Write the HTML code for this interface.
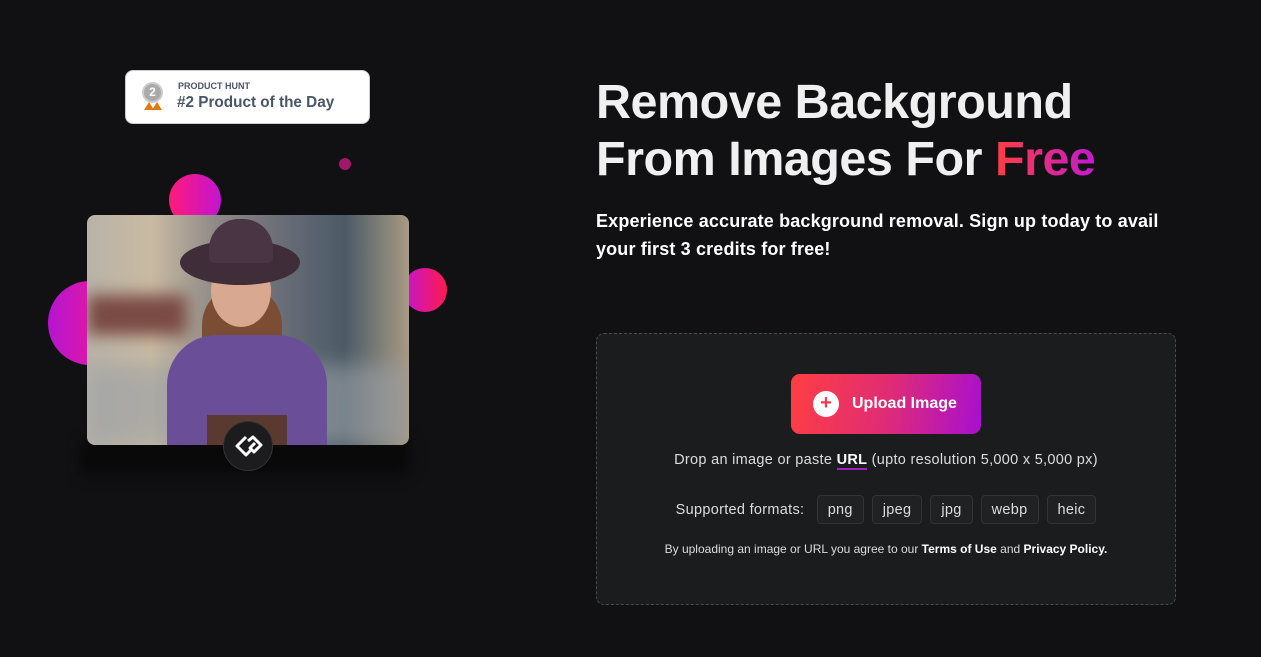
<!DOCTYPE html>
<html><head><meta charset="utf-8"><style>
*{margin:0;padding:0;box-sizing:border-box}
body{width:1261px;height:657px;background:#111113;font-family:"Liberation Sans",sans-serif;position:relative;overflow:hidden;color:#eee}
.abs{position:absolute}
.badge{left:125px;top:70px;width:245px;height:54px;background:#fff;border-radius:8px;border:1px solid #ccc}
.circ{border-radius:50%}
h1{position:absolute;left:596px;top:74px;font-size:48.5px;line-height:57px;font-weight:700;color:#f0f0f0;letter-spacing:-0.5px}
.free{background:linear-gradient(90deg,#ff3f3f,#c21ad0);-webkit-background-clip:text;color:transparent}
.sub{left:596px;top:207px;font-size:18px;line-height:28px;font-weight:700;color:#fff;letter-spacing:0.15px}
.box{left:596px;top:333px;width:580px;height:272px;border:1px dashed #4a4a4a;border-radius:8px;background:#1b1c1d}
.btn{left:791px;top:374px;width:190px;height:60px;border-radius:9px;background:linear-gradient(100deg,#ff3e42,#e02c74 50%,#a80fd0);color:#fff;font-weight:700;font-size:16px}
.fmt{display:inline-block;border:1px solid #333;background:#202122;border-radius:4px;padding:0 10px;height:29px;line-height:28px;margin-left:8px;font-size:14.5px;color:#ddd}
</style></head><body>
<div class="abs badge">
 <div class="abs circ" style="left:16px;top:11px;width:21px;height:21px;background:#aaa;border:2px solid #ccc;color:#fff;font-size:12px;font-weight:700;text-align:center;line-height:17px">2</div>
 <div class="abs" style="left:18px;top:31px;width:0;height:0;border-left:5px solid transparent;border-right:5px solid transparent;border-bottom:8px solid #e07a10"></div>
 <div class="abs" style="left:26px;top:31px;width:0;height:0;border-left:5px solid transparent;border-right:5px solid transparent;border-bottom:8px solid #e07a10"></div>
 <div class="abs" style="left:52px;top:10px;font-size:9px;font-weight:700;color:#4a5568">PRODUCT HUNT</div>
 <div class="abs" style="left:51px;top:23px;font-size:15.3px;font-weight:700;color:#4a5568">#2 Product of the Day</div>
</div>
<div class="abs circ" style="left:339px;top:158px;width:12px;height:12px;background:#a0186a"></div>
<div class="abs circ" style="left:169px;top:174px;width:52px;height:52px;background:linear-gradient(90deg,#ff1a7a,#c215d0)"></div>
<div class="abs circ" style="left:48px;top:281px;width:84px;height:84px;background:linear-gradient(90deg,#b515d0,#ff1a8a)"></div>
<div class="abs circ" style="left:403px;top:268px;width:44px;height:44px;background:linear-gradient(90deg,#c215d0,#ff1a50)"></div>
<div class="abs" style="left:80px;top:440px;width:330px;height:35px;background:#090909;filter:blur(6px)"></div>
<div class="abs" style="left:87px;top:215px;width:322px;height:230px;border-radius:8px;overflow:hidden;background:linear-gradient(90deg,#b8b2a8,#c9bba2 20%,#8f8a88 40%,#6a6e78 60%,#4b5a66 80%,#a89a84)">
 <div class="abs" style="left:0;top:80px;width:100px;height:40px;background:#7a4a44;filter:blur(8px)"></div>
 <div class="abs" style="left:0;top:150px;width:322px;height:80px;background:#9aa0a6;filter:blur(10px);opacity:.6"></div>
 <div class="abs" style="left:115px;top:70px;width:80px;height:130px;border-radius:40px;background:#7a4d34"></div>
 <div class="abs" style="left:80px;top:120px;width:160px;height:130px;border-radius:50px 50px 0 0;background:#6a4f98"></div>
 <div class="abs circ" style="left:124px;top:40px;width:60px;height:72px;background:#d8a990"></div>
 <div class="abs" style="left:93px;top:25px;width:120px;height:45px;border-radius:50%;background:#3f2d3a"></div>
 <div class="abs" style="left:122px;top:4px;width:64px;height:44px;border-radius:30px 30px 6px 6px;background:#4a3544"></div>
 <div class="abs" style="left:120px;top:200px;width:80px;height:40px;background:#5a3a30"></div>
</div>
<div class="abs circ" style="left:223px;top:421px;width:50px;height:50px;background:#1c1c1e;border:1px solid #333">
<svg width="50" height="50" viewBox="0 0 50 50"><path d="M22 15 L13 24 L22 33 L27 28 M24 19 L29 15 L37 23 L30 30 L26 26 L31 21" fill="none" stroke="#fff" stroke-width="3" stroke-linejoin="round"/></svg></div>
<h1>Remove Background<br>From Images For <span class="free">Free</span></h1>
<div class="abs sub">Experience accurate background removal. Sign up today to avail<br>your first 3 credits for free!</div>
<div class="abs box"></div>
<div class="abs btn"><div class="abs circ" style="left:22px;top:17px;width:26px;height:26px;background:#fff;color:#f03a50;text-align:center;line-height:25px;font-size:20px">+</div><div class="abs" style="left:61px;top:21px">Upload Image</div></div>
<div class="abs" style="left:596px;top:452px;width:580px;text-align:center;font-size:14.5px;letter-spacing:0.3px;color:#ddd">Drop an image or paste <b style="color:#fff;border-bottom:2px solid #a020c0">URL</b> (upto resolution 5,000 x 5,000 px)</div>
<div class="abs" style="left:596px;top:495px;width:580px;text-align:center;font-size:14.5px;letter-spacing:0.3px;color:#ddd">Supported formats: <span class="fmt">png</span><span class="fmt">jpeg</span><span class="fmt">jpg</span><span class="fmt">webp</span><span class="fmt">heic</span></div>
<div class="abs" style="left:596px;top:542px;width:580px;text-align:center;font-size:12px;color:#ddd">By uploading an image or URL you agree to our <b style="color:#fff">Terms of Use</b> and <b style="color:#fff">Privacy Policy.</b></div>
</body></html>
